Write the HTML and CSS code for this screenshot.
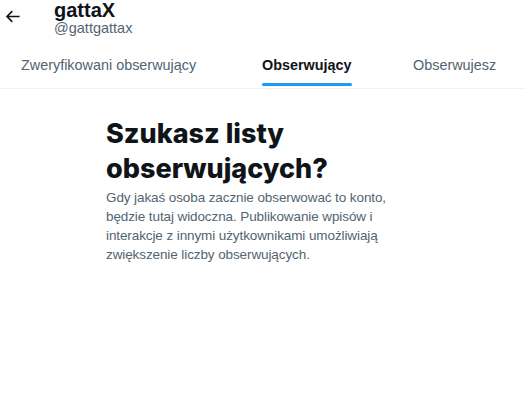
FILE: index.html
```html
<!DOCTYPE html>
<html lang="pl">
<head>
<meta charset="UTF-8" />
<title>Obserwujący – gattaX</title>
<link rel="stylesheet" href="styles.css">
</head>
<body>

<div class="top-bar">
  <button class="back-button" aria-label="Wstecz">
    <svg viewBox="0 0 24 24"><path d="M7.414 13l5.043 5.04-1.414 1.42L3.586 12l7.457-7.46 1.414 1.42L7.414 11H21v2H7.414z"></path></svg>
  </button>
  <div class="profile-name">
    <h2>gattaX</h2>
    <span>@gattgattax</span>
  </div>
</div>

<nav class="tabs">
  <a class="tab">Zweryfikowani obserwujący</a>
  <a class="tab active">Obserwujący<i class="tab-bar"></i></a>
  <a class="tab">Obserwujesz</a>
</nav>

<div class="empty-state">
  <h1>Szukasz listy obserwujących?</h1>
  <p>Gdy jakaś osoba zacznie obserwować to konto, będzie tutaj widoczna. Publikowanie wpisów i interakcje z innymi użytkownikami umożliwiają zwiększenie liczby obserwujących.</p>
</div>

</body>
</html>
```

FILE: styles.css
```css
body {
  margin: 0;
  font-family: "Liberation Sans", Arial, sans-serif;
  background-color: #fff;
  color: #0f1419;
}
.top-bar {
  display: flex;
  align-items: flex-start;
  height: 37px;
}
.back-button {
  width: 54px;
  height: 32px;
  padding: 0 0 0 3px;
  border: none;
  background: none;
  display: flex;
  align-items: center;
  cursor: pointer;
}
.back-button svg {
  width: 19px;
  height: 19px;
  fill: #0f1419;
}
.profile-name h2 {
  margin: 0;
  font-size: 20px;
  line-height: 20px;
  font-weight: bold;
}
.profile-name span {
  display: block;
  font-size: 14.5px;
  line-height: 16px;
  color: #536471;
}
.tabs {
  display: grid;
  grid-template-columns: 241px 151px auto;
  padding-left: 21px;
  border-bottom: 1px solid #eff3f4;
}
.tab {
  justify-self: start;
  display: flex;
  flex-direction: column;
  padding-top: 18px;
  font-size: 14.4px;
  line-height: 20px;
  color: #536471;
  cursor: pointer;
}
.tab::after {
  content: "";
  height: 13px;
}
.tab.active {
  color: #0f1419;
  font-weight: bold;
}
.tab.active::after {
  display: none;
}
.tab-bar {
  height: 3px;
  margin: 8px 0 2px;
  border-radius: 9999px;
  background-color: #1d9bf0;
}
.empty-state {
  width: 296px;
  margin: 27px 0 0 106px;
}
.empty-state h1 {
  margin: 0;
  font-family: Inter, "Liberation Sans", sans-serif;
  font-size: 27px;
  line-height: 35px;
  font-weight: 800;
}
.empty-state p {
  margin: 2px 0 0;
  font-size: 13.5px;
  line-height: 19px;
  letter-spacing: -0.1px;
  color: #536471;
}
```
